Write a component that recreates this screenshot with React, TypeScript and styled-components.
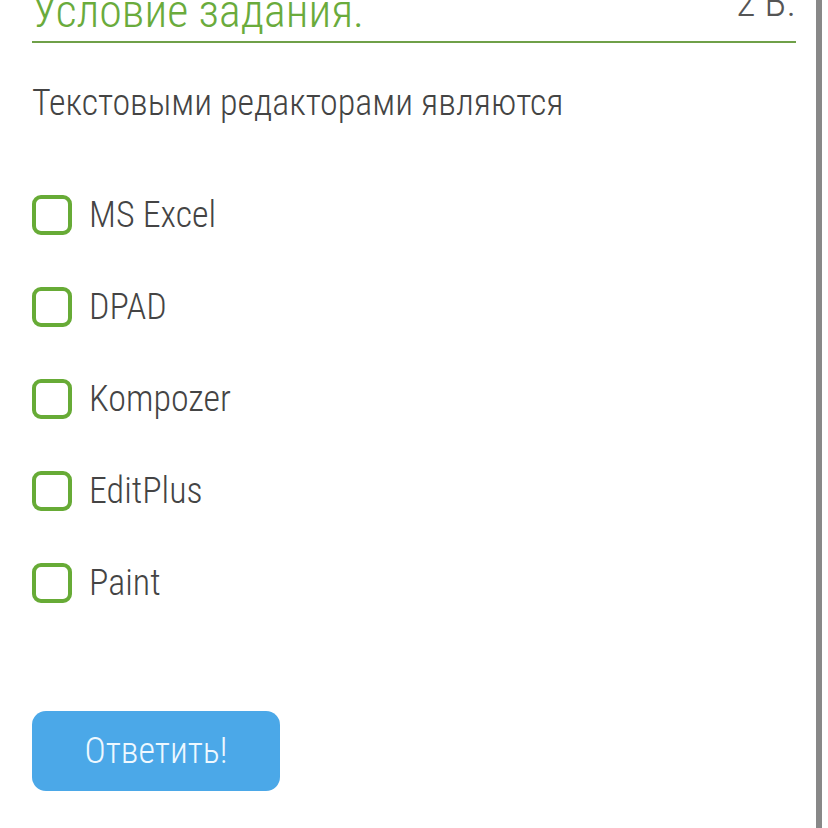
import React, { useState } from "react";
import styled, { createGlobalStyle } from "styled-components";

const GlobalStyle = createGlobalStyle`
  html, body {
    margin: 0;
    padding: 0;
    background: #fff;
    overflow: hidden;
  }
  body {
    font-family: Roboto, "Noto Sans", sans-serif;
  }
`;

const options = ["MS Excel", "DPAD", "Kompozer", "EditPlus", "Paint"];

const Quiz = () => {
  const [checked, setChecked] = useState<boolean[]>(options.map(() => false));

  const toggle = (i: number) => {
    setChecked(checked.map((c, j) => (j === i ? !c : c)));
  };

  return (
    <Page>
      <GlobalStyle />
      <Header>
        <Title>Условие задания.</Title>
        <Score>2 Б.</Score>
      </Header>

      <Question>Текстовыми редакторами являются</Question>

      <OptionList>
        {options.map((option, i) => (
          <Option key={option} onClick={() => toggle(i)}>
            <Box $checked={checked[i]} />
            <Label>{option}</Label>
          </Option>
        ))}
      </OptionList>

      <Button>Ответить!</Button>
    </Page>
  );
};

const Page = styled.div`
  width: 822px;
  height: 828px;
  box-sizing: border-box;
  padding: 0 20px 0 32px;
  border-right: 6px solid #888;
  display: flex;
  flex-direction: column;
  align-items: flex-start;
  font-weight: 300;
  font-stretch: 85%;
`;

const Header = styled.div`
  align-self: stretch;
  margin-top: -17px;
  padding-bottom: 7px;
  border-bottom: 2px solid #6fa048;
  display: flex;
  justify-content: space-between;
  align-items: flex-end;
`;

const Title = styled.div`
  font-size: 46px;
  line-height: 1;
  color: #6aab3c;
`;

const Score = styled.div`
  font-size: 40px;
  line-height: 1;
  color: #555;
  padding-bottom: 11px;
`;

const Question = styled.div`
  margin-top: 42px;
  font-size: 36px;
  line-height: 1;
  color: #444;
`;

const OptionList = styled.div`
  margin-top: 74px;
  display: flex;
  flex-direction: column;
  gap: 52px;
`;

const Option = styled.label`
  display: flex;
  align-items: center;
  gap: 17px;
  height: 40px;
  cursor: pointer;
`;

const Box = styled.span<{ $checked: boolean }>`
  width: 40px;
  height: 40px;
  box-sizing: border-box;
  border: 4px solid #67ab36;
  border-radius: 9px;
  background: ${(p) => (p.$checked ? "#67ab36" : "#fff")};
  flex-shrink: 0;
`;

const Label = styled.span`
  font-size: 36px;
  line-height: 40px;
  color: #444;
`;

const Button = styled.button`
  margin-top: 108px;
  width: 248px;
  height: 80px;
  border: none;
  border-radius: 14px;
  background: #4ba8e8;
  color: #eef8ff;
  font-family: Roboto, "Noto Sans", sans-serif;
  font-weight: 300;
  font-stretch: 85%;
  font-size: 36px;
  cursor: pointer;
`;

export default function App() {
  return <Quiz />;
}
